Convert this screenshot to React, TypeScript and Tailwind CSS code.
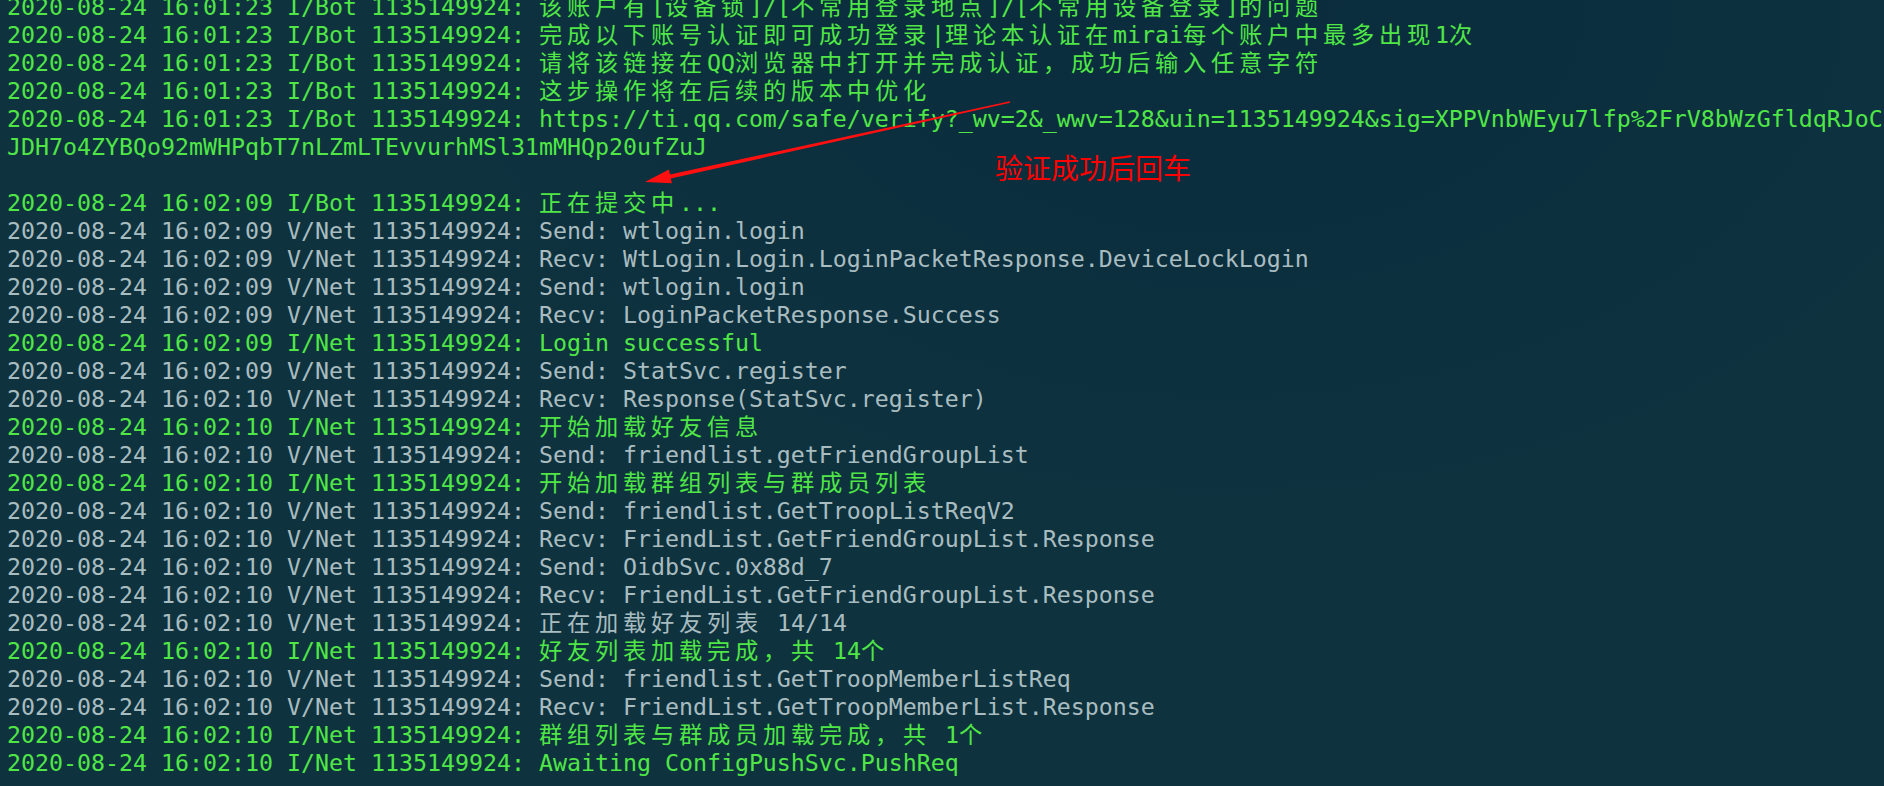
const GREEN = 'g';
const GRAY = 'v';

const ts1 = '2020-08-24 16:01:23';
const ts2 = '2020-08-24 16:02:09';
const ts3 = '2020-08-24 16:02:10';

const lines: { tone: string; text: string }[] = [
  { tone: GREEN, text: `${ts1} I/Bot 1135149924: 该账户有[设备锁]/[不常用登录地点]/[不常用设备登录]的问题` },
  { tone: GREEN, text: `${ts1} I/Bot 1135149924: 完成以下账号认证即可成功登录|理论本认证在mirai每个账户中最多出现1次` },
  { tone: GREEN, text: `${ts1} I/Bot 1135149924: 请将该链接在QQ浏览器中打开并完成认证，成功后输入任意字符` },
  { tone: GREEN, text: `${ts1} I/Bot 1135149924: 这步操作将在后续的版本中优化` },
  { tone: GREEN, text: `${ts1} I/Bot 1135149924: https://ti.qq.com/safe/verify?_wv=2&_wwv=128&uin=1135149924&sig=XPPVnbWEyu7lfp%2FrV8bWzGfldqRJoC` },
  { tone: GREEN, text: 'JDH7o4ZYBQo92mWHPqbT7nLZmLTEvvurhMSl31mMHQp20ufZuJ' },
  { tone: GREEN, text: '' },
  { tone: GREEN, text: `${ts2} I/Bot 1135149924: 正在提交中...` },
  { tone: GRAY, text: `${ts2} V/Net 1135149924: Send: wtlogin.login` },
  { tone: GRAY, text: `${ts2} V/Net 1135149924: Recv: WtLogin.Login.LoginPacketResponse.DeviceLockLogin` },
  { tone: GRAY, text: `${ts2} V/Net 1135149924: Send: wtlogin.login` },
  { tone: GRAY, text: `${ts2} V/Net 1135149924: Recv: LoginPacketResponse.Success` },
  { tone: GREEN, text: `${ts2} I/Net 1135149924: Login successful` },
  { tone: GRAY, text: `${ts2} V/Net 1135149924: Send: StatSvc.register` },
  { tone: GRAY, text: `${ts3} V/Net 1135149924: Recv: Response(StatSvc.register)` },
  { tone: GREEN, text: `${ts3} I/Net 1135149924: 开始加载好友信息` },
  { tone: GRAY, text: `${ts3} V/Net 1135149924: Send: friendlist.getFriendGroupList` },
  { tone: GREEN, text: `${ts3} I/Net 1135149924: 开始加载群组列表与群成员列表` },
  { tone: GRAY, text: `${ts3} V/Net 1135149924: Send: friendlist.GetTroopListReqV2` },
  { tone: GRAY, text: `${ts3} V/Net 1135149924: Recv: FriendList.GetFriendGroupList.Response` },
  { tone: GRAY, text: `${ts3} V/Net 1135149924: Send: OidbSvc.0x88d_7` },
  { tone: GRAY, text: `${ts3} V/Net 1135149924: Recv: FriendList.GetFriendGroupList.Response` },
  { tone: GRAY, text: `${ts3} V/Net 1135149924: 正在加载好友列表 14/14` },
  { tone: GREEN, text: `${ts3} I/Net 1135149924: 好友列表加载完成，共 14个` },
  { tone: GRAY, text: `${ts3} V/Net 1135149924: Send: friendlist.GetTroopMemberListReq` },
  { tone: GRAY, text: `${ts3} V/Net 1135149924: Recv: FriendList.GetTroopMemberList.Response` },
  { tone: GREEN, text: `${ts3} I/Net 1135149924: 群组列表与群成员加载完成，共 1个` },
  { tone: GREEN, text: `${ts3} I/Net 1135149924: Awaiting ConfigPushSvc.PushReq` },
];

// wide (CJK) runs take two terminal cells each
function Cells({ text }: { text: string }) {
  const parts = text.split(/([\u3000-\u9fff\uff00-\uffef]+)/);
  return (
    <>
      {parts.map((p, i) =>
        i % 2 === 1 ? (
          <span key={i} className="tracking-[4.75px]">{p}</span>
        ) : (
          <span key={i}>{p}</span>
        )
      )}
    </>
  );
}

export default function App() {
  return (
    <div className="relative w-full h-[786px] overflow-hidden bg-[#0e333e] bg-[radial-gradient(ellipse_at_65%_0%,#0a2c3e_0%,#0e333e_55%)]">
      <div
        className="-mt-[7px] pl-[7px] flex flex-col text-[23.25px] leading-[28px] whitespace-pre"
        style={{ fontFamily: '"DejaVu Sans Mono", "Noto Sans CJK SC", monospace' }}
      >
        {lines.map((l, i) => (
          <div
            key={i}
            className={`h-[28px] ${l.tone === GREEN ? 'text-[#50e646]' : 'text-[#a9bcc0]'}`}
          >
            <Cells text={l.text} />
          </div>
        ))}
      </div>

      {/* annotation */}
      <svg className="absolute left-0 top-0 pointer-events-none" width="1884" height="786">
        <polygon
          fill="#ff1010"
          points="1009.8,101.2 670.0,174.5 668.9,169.6 645,182 671.9,183.2 670.8,178.4 1010.2,102.8"
        />
      </svg>
      <div
        className="absolute left-[995px] top-[153px] text-[28px] leading-[28px] text-[#ff0000]"
        style={{ fontFamily: '"Noto Sans CJK SC", sans-serif' }}
      >
        验证成功后回车
      </div>
    </div>
  );
}
